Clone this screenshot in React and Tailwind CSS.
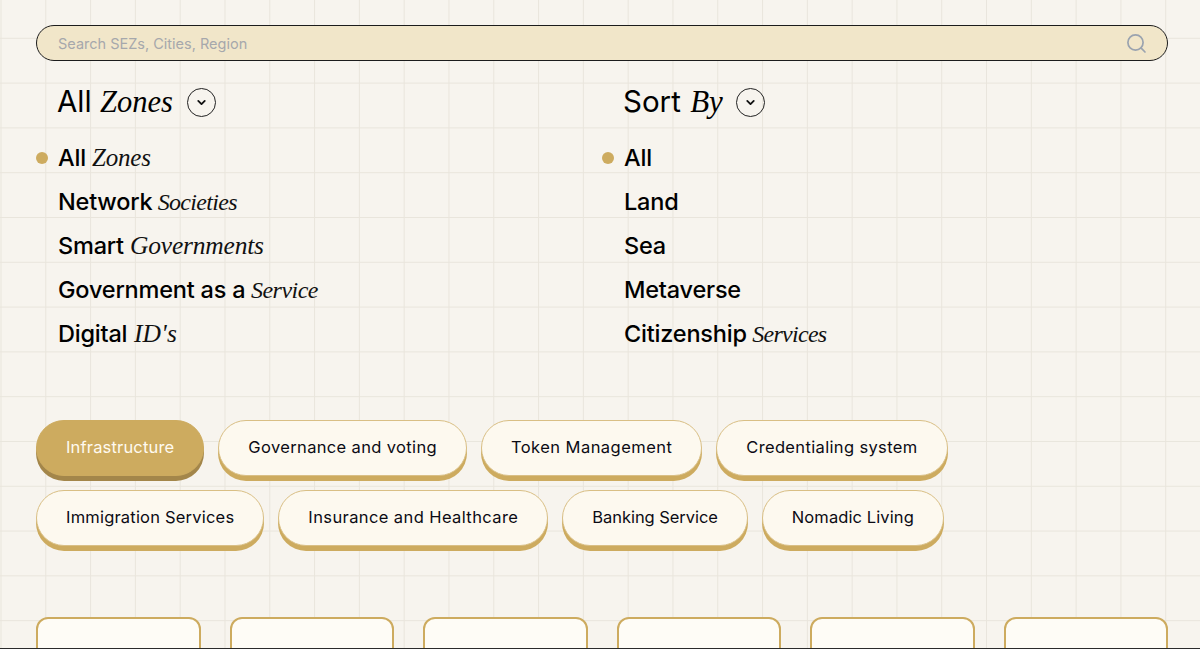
import React from "react";

const serif = "font-['Liberation_Serif',serif] italic font-normal";

function Chevron() {
  return (
    <span className="flex h-[29px] w-[29px] items-center justify-center rounded-full border border-[#222]">
      <svg width="13" height="13" viewBox="0 0 24 24" fill="none" stroke="#111" strokeWidth="3.4" strokeLinecap="round" strokeLinejoin="round">
        <path d="M6 9l6 6 6-6" />
      </svg>
    </span>
  );
}

function Row({ a, b, bClass, active }) {
  return (
    <li className="flex h-[44px] items-center">
      <span className={`mr-[10px] h-[12px] w-[12px] rounded-full ${active ? "bg-[#cdab5f]" : ""}`} />
      <span className="whitespace-pre text-[23.5px] font-medium tracking-[-0.2px] text-black">
        {a}
        {b && <span className={`${serif} text-[#111] ${bClass}`}> {b}</span>}
      </span>
    </li>
  );
}

function Column({ a, b, headClass, gap, rows }) {
  return (
    <div>
      <div className="flex h-[40px] items-center pl-[21px]">
        <span className="whitespace-pre text-[29.5px] font-normal text-black">
          {a} <span className={`${serif} ${headClass}`}>{b}</span>
        </span>
        <span className={gap}><Chevron /></span>
      </div>
      <ul className="mt-[14px]">
        {rows.map((r, i) => (
          <Row key={i} a={r[0]} b={r[1]} bClass={r[2]} active={i === 0} />
        ))}
      </ul>
    </div>
  );
}

function Chip({ label, track, active }) {
  return (
    <button
      className={`h-[56px] rounded-full border px-[29px] pb-[2px] text-[16.5px] ${track} ${
        active
          ? "border-[#cdab5f] bg-[#cdab5f] text-[#fffaf0] shadow-[0_5px_0_#a3864a]"
          : "border-[#d9bf85] bg-[#fdf9ef] text-[#0b0b14] shadow-[0_5px_0_#cdab5f]"
      }`}
    >
      {label}
    </button>
  );
}

export default function App() {
  return (
    <div className="relative h-screen overflow-hidden bg-[#f7f4ee] bg-[linear-gradient(to_right,#e9e5dc_1px,transparent_1px),linear-gradient(to_bottom,#e9e5dc_1px,transparent_1px)] bg-[size:44.8px_44.8px] bg-[position:0.5px_-7px] pl-9 pr-8 pt-[25px] font-['Inter',sans-serif]">
      <div className="flex h-[36px] items-center justify-between rounded-full border border-[#1c1c1c] bg-[#f1e6c9] pl-[21px] pr-[20px]">
        <span className="pt-[2px] text-[14.5px] text-[#a6a8ac]">Search SEZs, Cities, Region</span>
        <svg width="21" height="21" viewBox="0 0 21 21" fill="none" stroke="#9aa3af" strokeWidth="1.7" strokeLinecap="round">
          <circle cx="9.5" cy="9.5" r="7.6" />
          <path d="M15.2 15.2L19 19" />
        </svg>
      </div>

      <div className="mt-[21px] grid grid-cols-2">
        <Column
          a="All"
          b="Zones"
          headClass="text-[30.5px]"
          gap="ml-[14px]"
          rows={[
            ["All", "Zones", "text-[25px]"],
            ["Network", "Societies", "text-[24px] tracking-[-0.7px]"],
            ["Smart", "Governments", "text-[25.5px]"],
            ["Government as a", "Service", "text-[24px] tracking-[-0.5px]"],
            ["Digital", "ID's", "text-[25.5px] tracking-[0.2px]"],
          ]}
        />
        <Column
          a="Sort"
          b="By"
          headClass="pl-[1px] text-[31px]"
          gap="ml-[13px]"
          rows={[["All"], ["Land"], ["Sea"], ["Metaverse"], ["Citizenship", "Services", "text-[24px] tracking-[-0.7px]"]]}
        />
      </div>

      <div className="mt-[64px] flex gap-[14px]">
        <Chip label="Infrastructure" track="tracking-[0.17px]" active />
        <Chip label="Governance and voting" track="tracking-[0.35px]" />
        <Chip label="Token Management" track="tracking-[0.45px]" />
        <Chip label="Credentialing system" track="tracking-[0.35px]" />
      </div>
      <div className="mt-[14px] flex gap-[14px]">
        <Chip label="Immigration Services" track="tracking-[0.2px]" />
        <Chip label="Insurance and Healthcare" track="tracking-[0.4px]" />
        <Chip label="Banking Service" track="tracking-[-0.06px]" />
        <Chip label="Nomadic Living" track="tracking-[0.1px]" />
      </div>

      <div className="mt-[71px] grid grid-cols-6 gap-[29px]">
        {[0, 1, 2, 3, 4, 5].map((i) => (
          <div key={i} className="h-[200px] rounded-[12px] border-2 border-[#cdab5f] bg-[#fefcf6]" />
        ))}
      </div>
      <div className="absolute inset-x-0 bottom-0 h-px bg-[#2b2b2b]" />
    </div>
  );
}
